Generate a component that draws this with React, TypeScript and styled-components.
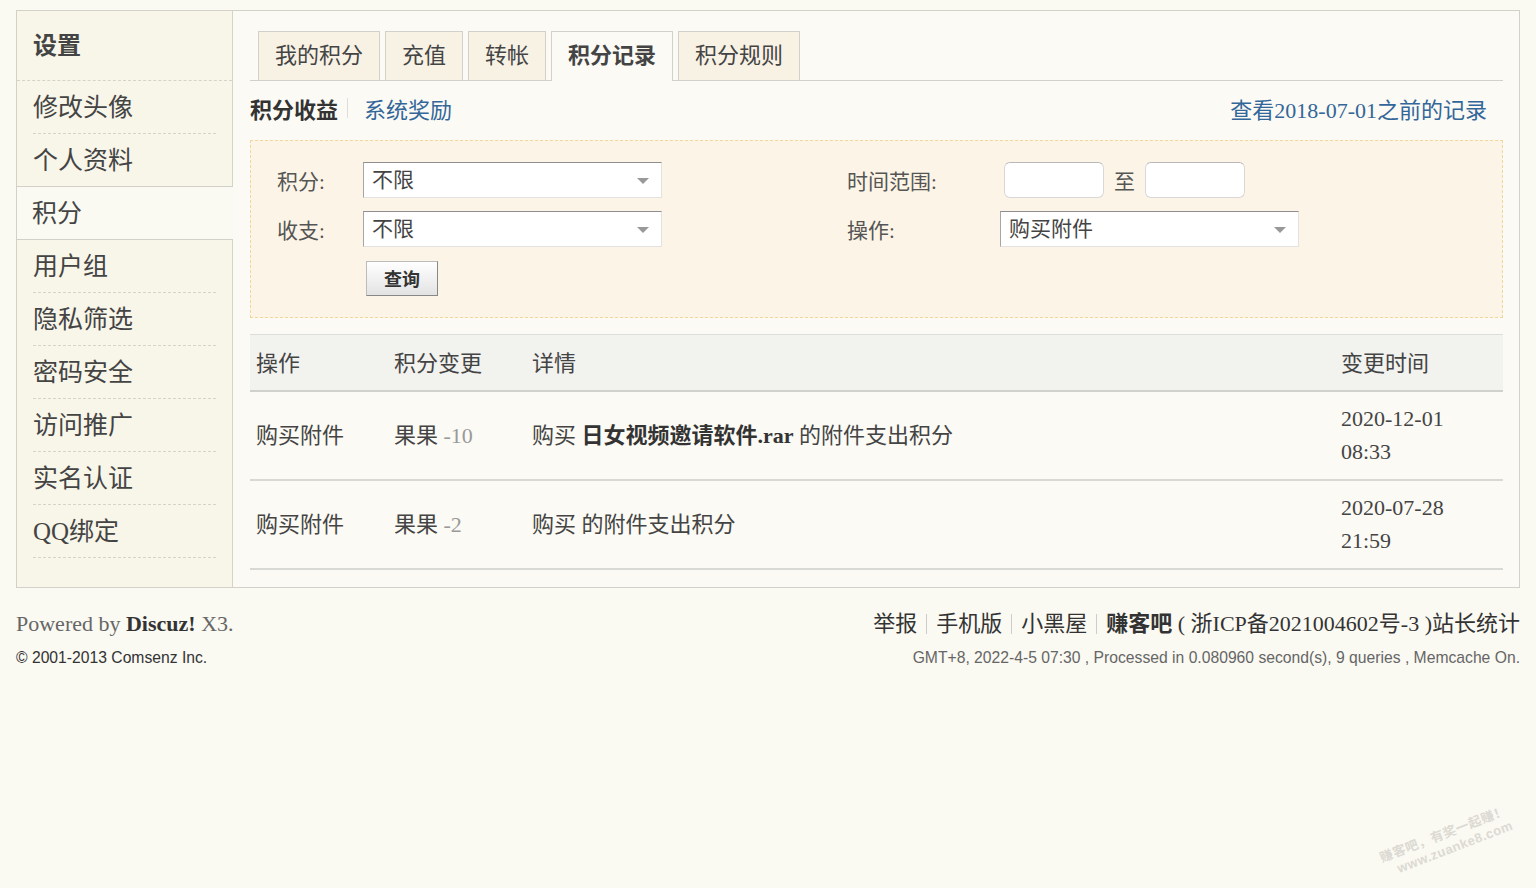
import styled, { createGlobalStyle } from "styled-components"

const GlobalStyle = createGlobalStyle`
  html, body {
    margin: 0;
    padding: 0;
    background: #faf9f2;
  }
  body {
    font-family: "Liberation Serif", "Noto Sans CJK SC", serif;
    color: #333;
    min-height: 888px;
  }
`

const menuItems = ["修改头像", "个人资料", "积分", "用户组", "隐私筛选", "密码安全", "访问推广", "实名认证", "QQ绑定"]
const activeMenu = "积分"

const tabs = ["我的积分", "充值", "转帐", "积分记录", "积分规则"]
const activeTab = "积分记录"

const records = [
  { op: "购买附件", unit: "果果", amount: "-10", file: "日女视频邀请软件.rar", date: "2020-12-01", time: "08:33" },
  { op: "购买附件", unit: "果果", amount: "-2", file: "", date: "2020-07-28", time: "21:59" }
]

export default function App() {
  return (
    <>
      <GlobalStyle />
      <Page>
        <Frame>
          <Sidebar>
            <SideTitle>设置</SideTitle>
            {menuItems.map((item, i) => (
              <SideItem
                key={item}
                $active={item === activeMenu}
                $beforeActive={menuItems[i + 1] === activeMenu}
              >
                {item}
              </SideItem>
            ))}
          </Sidebar>

          <Main>
            <TabBar>
              {tabs.map((t) => (
                <Tab key={t} $active={t === activeTab}>
                  {t}
                </Tab>
              ))}
            </TabBar>

            <SubBar>
              <SubLinks>
                <SubCurrent>积分收益</SubCurrent>
                <SubDivider />
                <BlueLink>系统奖励</BlueLink>
              </SubLinks>
              <BlueLink>查看2018-07-01之前的记录</BlueLink>
            </SubBar>

            <FilterBox>
              <FilterGrid>
                <FieldLabel>积分:</FieldLabel>
                <Select $width={299}>不限</Select>
                <FieldLabel>时间范围:</FieldLabel>
                <DateRange>
                  <DateInput />
                  <span>至</span>
                  <DateInput />
                </DateRange>

                <FieldLabel>收支:</FieldLabel>
                <Select $width={299}>不限</Select>
                <FieldLabel>操作:</FieldLabel>
                <Select $width={299} $shift={-4}>购买附件</Select>

                <span />
                <QueryButton>查询</QueryButton>
              </FilterGrid>
            </FilterBox>

            <Table>
              <thead>
                <tr>
                  <Th $w={138}>操作</Th>
                  <Th $w={138}>积分变更</Th>
                  <Th $w={809}>详情</Th>
                  <Th>变更时间</Th>
                </tr>
              </thead>
              <tbody>
                {records.map((r, i) => (
                  <tr key={i}>
                    <Td>{r.op}</Td>
                    <Td>
                      {r.unit} <Amount>{r.amount}</Amount>
                    </Td>
                    <Td>
                      购买 {r.file && <b>{r.file}</b>} 的附件支出积分
                    </Td>
                    <Td>
                      {r.date}
                      <br />
                      {r.time}
                    </Td>
                  </tr>
                ))}
              </tbody>
            </Table>
          </Main>
        </Frame>

        <Footer>
          <FooterCol>
            <Powered>
              Powered by <b>Discuz!</b> X3.
            </Powered>
            <SmallText>© 2001-2013 Comsenz Inc.</SmallText>
          </FooterCol>
          <FooterCol $right>
            <FooterLinks>
              <span>举报</span>
              <Pipe />
              <span>手机版</span>
              <Pipe />
              <span>小黑屋</span>
              <Pipe />
              <b>赚客吧</b>
              <span>&nbsp;( 浙ICP备2021004602号-3 )站长统计</span>
            </FooterLinks>
            <SmallText $muted>
              GMT+8, 2022-4-5 07:30 , Processed in 0.080960 second(s), 9 queries , Memcache On.
            </SmallText>
          </FooterCol>
        </Footer>

        <Watermark>
          <span>赚客吧，有奖一起赚！</span>
          <span>www.zuanke8.com</span>
        </Watermark>
      </Page>
    </>
  )
}

const Page = styled.div`
  position: relative;
  min-height: 888px;
  padding: 10px 16px 0;
  box-sizing: border-box;
`

const Frame = styled.div`
  display: flex;
  width: 1504px;
  box-sizing: border-box;
  border: 1px solid #d2d0c8;
  background: #fbfaf4;
`

const Sidebar = styled.div`
  width: 215px;
  flex-shrink: 0;
  background: #f8f5e9;
  border-right: 1px solid #d6d3c8;
`

const SideTitle = styled.div`
  height: 69px;
  line-height: 71px;
  padding-left: 16px;
  font-size: 24px;
  font-weight: bold;
  color: #444;
  border-bottom: 1px dashed #d6d3c8;
`

const SideItem = styled.div<{ $active?: boolean; $beforeActive?: boolean }>`
  height: 52px;
  line-height: 54px;
  font-size: 25px;
  color: #444;
  ${({ $active, $beforeActive }) =>
    $active
      ? `
    margin-right: -1px;
    padding-left: 15px;
    background: #faf9f2;
    border-top: 1px solid #d2d0c8;
    border-bottom: 1px solid #d2d0c8;
    margin-top: -1px;
  `
      : `
    margin: 0 16px 0 16px;
    border-bottom: 1px ${$beforeActive ? "solid transparent" : "dashed #d6d3c8"};
  `}
`

const Main = styled.div`
  flex: 1;
  padding: 20px 16px 17px 17px;
`

const TabBar = styled.div`
  display: flex;
  gap: 5px;
  padding-left: 8px;
  border-bottom: 1px solid #d2d0c8;
`

const Tab = styled.div<{ $active?: boolean }>`
  line-height: 48px;
  padding: 0 16px;
  font-size: 22px;
  color: #444;
  border: 1px solid #d2d0c8;
  border-bottom: none;
  background: ${({ $active }) => ($active ? "#fbfaf4" : "#f8f2e4")};
  font-weight: ${({ $active }) => ($active ? "bold" : "normal")};
  margin-bottom: ${({ $active }) => ($active ? "-1px" : "0")};
  height: ${({ $active }) => ($active ? "49px" : "48px")};
`

const SubBar = styled.div`
  display: flex;
  align-items: center;
  justify-content: space-between;
  height: 53px;
  padding: 0 16px 6px 0;
`

const SubLinks = styled.div`
  display: flex;
  align-items: center;
`

const SubCurrent = styled.span`
  font-size: 22px;
  font-weight: bold;
  color: #333;
`

const SubDivider = styled.span`
  width: 1px;
  height: 20px;
  background: #ddd;
  margin: 0 16px 0 9px;
`

const BlueLink = styled.span`
  font-size: 22px;
  color: #369;
`

const FilterBox = styled.div`
  border: 1px dashed #efd99a;
  background: #fcf4e6;
  padding: 21px 0 21px 26px;
`

const FilterGrid = styled.div`
  display: grid;
  grid-template-columns: 86px 484px 157px auto;
  grid-auto-rows: 36px;
  row-gap: 13px;
  align-items: center;
  font-size: 22px;
  color: #444;
`

const FieldLabel = styled.span`
  font-size: 21px;
  color: #555;
`

const Select = styled.div<{ $width: number; $shift?: number }>`
  position: relative;
  width: ${({ $width }) => $width}px;
  height: 36px;
  box-sizing: border-box;
  margin-left: ${({ $shift }) => $shift ?? 0}px;
  padding-left: 8px;
  line-height: 34px;
  font-size: 21px;
  color: #444;
  background: #fff;
  border: 1px solid #e2e2e2;
  border-top-color: #8e8e8e;
  border-left-color: #a5a5a5;

  &::after {
    content: "";
    position: absolute;
    right: 12px;
    top: 15px;
    border-left: 6px solid transparent;
    border-right: 6px solid transparent;
    border-top: 6px solid #999;
  }
`

const DateRange = styled.div`
  display: flex;
  align-items: center;
  gap: 10px;
  font-size: 21px;
  color: #555;
`

const DateInput = styled.div`
  width: 100px;
  height: 36px;
  box-sizing: border-box;
  background: #fff;
  border: 1px solid #d8d8d8;
  border-top-color: #b8b8b8;
  border-radius: 6px;
`

const QueryButton = styled.button`
  width: 72px;
  height: 35px;
  margin-left: 3px;
  padding: 0;
  font-family: "Noto Sans CJK SC", sans-serif;
  font-size: 18px;
  font-weight: bold;
  color: #333;
  border: 1px solid #999;
  border-color: #bbb #888 #888 #bbb;
  background: linear-gradient(#ffffff, #e3e3e3);
`

const Table = styled.table`
  width: 100%;
  margin-top: 16px;
  border-collapse: collapse;
  font-size: 22px;
  color: #444;
`

const Th = styled.th<{ $w?: number }>`
  width: ${({ $w }) => ($w ? `${$w - 6}px` : "auto")};
  height: 51px;
  padding: 0 0 4px 6px;
  text-align: left;
  font-weight: normal;
  background: #f2f2ef;
  border-top: 1px solid #dddddb;
  border-bottom: 2px solid #d0d0cd;
`

const Td = styled.td`
  padding: 10px 0 11px 6px;
  line-height: 33px;
  border-bottom: 2px solid #d8d8d5;
  vertical-align: middle;

  b {
    font-weight: bold;
    color: #333;
  }
`

const Amount = styled.span`
  color: #999;
`

const Footer = styled.div`
  display: flex;
  justify-content: space-between;
  width: 1504px;
  padding-top: 22px;
`

const FooterCol = styled.div<{ $right?: boolean }>`
  display: flex;
  flex-direction: column;
  align-items: ${({ $right }) => ($right ? "flex-end" : "flex-start")};
  gap: 10px;
`

const Powered = styled.div`
  font-size: 22px;
  color: #666;
  line-height: 28px;

  b {
    color: #333;
  }
`

const SmallText = styled.div<{ $muted?: boolean }>`
  font-family: "Liberation Sans", sans-serif;
  font-size: 15.7px;
  line-height: 20px;
  color: ${({ $muted }) => ($muted ? "#666" : "#333")};
`

const FooterLinks = styled.div`
  display: flex;
  align-items: center;
  font-size: 22px;
  line-height: 28px;
  color: #333;

  b {
    font-weight: bold;
  }
`

const Pipe = styled.span`
  width: 1px;
  height: 20px;
  background: #ccc;
  margin: 0 9px;
`

const Watermark = styled.div`
  position: absolute;
  right: 22px;
  bottom: 30px;
  display: flex;
  flex-direction: column;
  align-items: flex-end;
  transform: rotate(-21deg);
  font-family: "Liberation Sans", "Noto Sans CJK SC", sans-serif;
  font-size: 13px;
  font-weight: bold;
  line-height: 16px;
  color: #dcdad2;
  letter-spacing: 0.5px;
`
